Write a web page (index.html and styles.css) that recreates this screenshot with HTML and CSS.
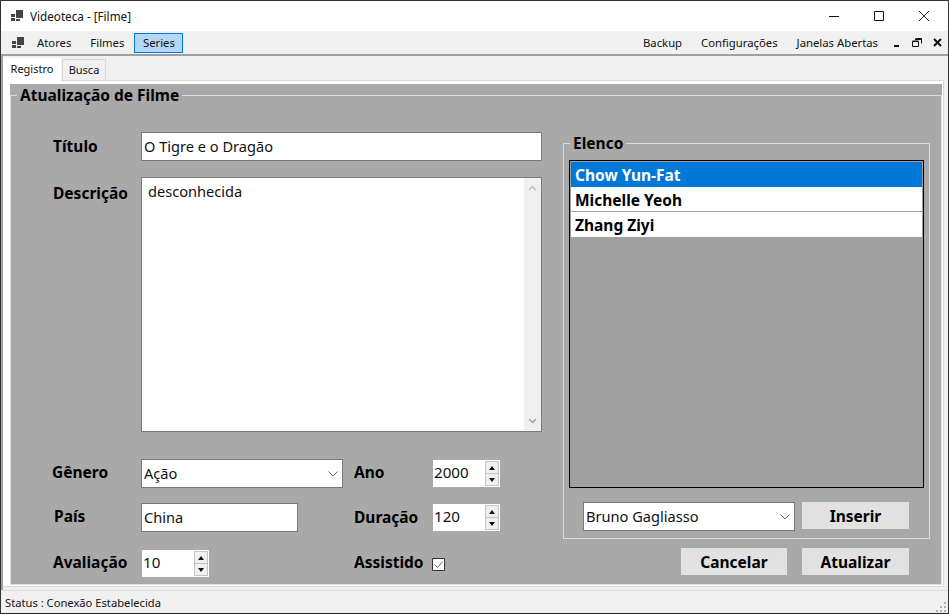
FILE: index.html
```html
<!DOCTYPE html>
<html lang="en">
<head>
	<meta charset="utf-8">
	<title>Videoteca - [Filme]</title>
	<link rel="stylesheet" href="styles.css">
</head>

<body>
	<div class="window">
		<div class="titlebar">
			<svg class="appicon" width="12" height="12" viewBox="0 0 12 12"><path d="M5 0h7v8H5zM0 4h4v3H0zM0 8h4v3H0zM5 9h4v2H5z" fill="#444"/></svg>
			<span class="titletext">Videoteca - [Filme]</span>
			<div class="wincontrols">
				<svg width="12" height="12" viewBox="0 0 12 12"><path d="M1 6.500h10" stroke="#111" fill="none"/></svg>
				<svg width="12" height="12" viewBox="0 0 12 12"><path d="M1.500 1.500h9v9h-9z" stroke="#111" fill="none"/></svg>
				<svg width="12" height="12" viewBox="0 0 12 12"><path d="M1 1l10 10M11 1L1 11" stroke="#222" fill="none"/></svg>
			</div>
		</div>

		<div class="menubar">
			<svg class="menuicon" width="12" height="12" viewBox="0 0 12 12"><path d="M5 0h7v8H5zM0 4h4v3H0zM0 8h4v3H0zM5 9h4v2H5z" fill="#444"/></svg>
			<span class="menuitem">Atores</span>
			<span class="menuitem">Filmes</span>
			<span class="menuitem active">Series</span>
			<span class="menuright">
				<span class="menuitem">Backup</span>
				<span class="menuitem">Configurações</span>
				<span class="menuitem">Janelas Abertas</span>
				<span class="mdicontrols">
					<svg width="8" height="9" viewBox="0 0 8 9"><path d="M1 7h5v2H1z" fill="#111"/></svg>
					<svg width="10" height="9" viewBox="0 0 10 9"><path d="M3.500.5h6v5M3 1.500h6M.5 3.500h6v5h-6zM.5 3h6" stroke="#111" fill="none"/></svg>
					<svg width="9" height="9" viewBox="0 0 9 9"><path d="M1 1l7 7M8 1L1 8" stroke="#111" stroke-width="2" fill="none"/></svg>
				</span>
			</span>
		</div>

		<div class="content">
			<div class="tabs">
				<span class="tab selected">Registro</span>
				<span class="tab">Busca</span>
			</div>
			<div class="tabpage">
				<div class="panel">
					<fieldset class="mainbox">
						<legend>Atualização de Filme</legend>
						<div class="leftcol">
							<div class="row row-titulo">
								<label>Título</label>
								<div class="field fill">O Tigre e o Dragão</div>
							</div>
							<div class="row row-desc">
								<label>Descrição</label>
								<div class="field memo">
									<span class="memotext">desconhecida</span>
									<div class="scrollbar">
										<svg width="9" height="6" viewBox="0 0 9 6"><path d="M1 5l3.500-3.500L8 5" stroke="#bdbdbd" stroke-width="1.500" fill="none"/></svg>
										<svg width="9" height="6" viewBox="0 0 9 6"><path d="M1 1l3.500 3.500L8 1" stroke="#a0a0a0" stroke-width="1.500" fill="none"/></svg>
									</div>
								</div>
							</div>
							<div class="lowergrid">
								<label>Gênero</label>
								<div class="field combo">Ação
									<svg width="10" height="6" viewBox="0 0 10 6"><path d="M.5.5L5 5 9.500.5" stroke="#666" fill="none"/></svg>
								</div>
								<label>Ano</label>
								<div class="spinner"><span>2000</span>
									<div class="spin"><i class="up"></i><i class="down"></i></div>
								</div>

								<label class="l-pais">País</label>
								<div class="field short">China</div>
								<label class="l-duracao">Duração</label>
								<div class="spinner"><span>120</span>
									<div class="spin"><i class="up"></i><i class="down"></i></div>
								</div>

								<label class="l-aval">Avaliação</label>
								<div class="spinner sp-aval"><span>10</span>
									<div class="spin"><i class="up"></i><i class="down"></i></div>
								</div>
								<label>Assistido</label>
								<div class="check">
									<svg width="13" height="13" viewBox="0 0 13 13"><path d="M.5.5h12v12H.5z" fill="#fff" stroke="#333"/><path d="M2.500 6.500l3 3 5-6" stroke="#666" fill="none"/></svg>
								</div>
							</div>
						</div>

						<div class="rightcol">
							<fieldset class="castbox">
								<legend>Elenco</legend>
								<ul class="castlist">
									<li class="current">Chow Yun-Fat</li>
									<li>Michelle Yeoh</li>
									<li>Zhang Ziyi</li>
								</ul>
								<div class="castadd">
									<div class="field combo castcombo">Bruno Gagliasso
										<svg width="10" height="6" viewBox="0 0 10 6"><path d="M.5.5L5 5 9.500.5" stroke="#666" fill="none"/></svg>
									</div>
									<button>Inserir</button>
								</div>
							</fieldset>
							<div class="actions">
								<button class="cancel">Cancelar</button>
								<button>Atualizar</button>
							</div>
						</div>
					</fieldset>
				</div>
			</div>
		</div>

		<div class="statusbar">
			<span>Status : Conexão Estabelecida</span>
			<svg width="11" height="11" viewBox="0 0 11 11"><path d="M8 0h2v2H8zM4 4h2v2H4zM8 4h2v2H8zM0 8h2v2H0zM4 8h2v2H4zM8 8h2v2H8z" fill="#b0b0b0"/></svg>
		</div>
	</div>
</body>

</html>
```

FILE: styles.css
```css
* {
	box-sizing: border-box;
}

body {
	margin: 0;
	font-family: "Noto Sans", Arial, sans-serif;
	font-size: 11.3px;
	color: #000;
	background: #fff;
}

.window {
	width: 949px;
	height: 614px;
	border: 1px solid #333;
	border-bottom-color: #222;
	display: flex;
	flex-direction: column;
	overflow: hidden;
}

/* title bar */
.titlebar {
	height: 30px;
	flex: none;
	display: flex;
	align-items: center;
	background: #fff;
}

.appicon {
	margin-left: 10px;
}

.titletext {
	margin-left: 7px;
	color: #111;
	font-size: 11.7px;
}

.wincontrols {
	margin-left: auto;
	display: flex;
	gap: 33px;
	margin-right: 18px;
}

/* menu */
.menubar {
	height: 25px;
	flex: none;
	display: flex;
	align-items: center;
	background: #f0f0f0;
	border-bottom: 2px solid #a0a0a0;
	padding-top: 1px;
}

.menuicon {
	margin-left: 11px;
	margin-right: 12px;
}

.menuitem {
	padding: 0 1px;
	margin-right: 17px;
	color: #111;
	line-height: 20px;
}

.menuitem.active {
	margin-right: 0;
	margin-left: -8px;
	width: 49px;
	height: 20px;
	line-height: 18px;
	text-align: center;
	background: #b5d7f3;
	border: 1px solid #0078d7;
}

.menuright {
	margin-left: auto;
	display: flex;
	align-items: center;
}

.menuright .menuitem {
	margin-right: 17px;
}

.menuright .menuitem:nth-child(3) {
	margin-right: 14px;
}

.mdicontrols {
	display: flex;
	align-items: center;
	gap: 11px;
	margin-right: 6px;
	margin-bottom: 2px;
}

/* tabs */
.content {
	flex: 1;
	min-height: 0;
	background: #f0f0f0;
	border-left: 2px solid #a0a0a0;
	padding: 1px 4px 3px 0;
	display: flex;
	flex-direction: column;
}

.tabs {
	height: 23px;
	flex: none;
	display: flex;
	align-items: flex-end;
	gap: 1px;
}

.tab {
	height: 21px;
	width: 44px;
	text-align: center;
	background: #f0f0f0;
	border: 1px solid #d9d9d9;
	border-bottom: none;
	color: #111;
	line-height: 20px;
	font-size: 11px;
}

.tab.selected {
	height: 23px;
	width: 58px;
	background: #fff;
	border-color: #fff;
	line-height: 19px;
	margin-bottom: -1px;
	position: relative;
}

.tabpage {
	flex: 1;
	min-height: 0;
	background: #fff;
	border: 1px solid #d9d9d9;
	border-left: none;
	padding: 3px 1px 1px 7px;
	display: flex;
}

.panel {
	flex: 1;
	display: flex;
	background: #a9a9a9;
}

/* main group */
fieldset {
	margin: 0;
	min-width: 0;
	border: 1px solid #dcdcdc;
}

legend {
	padding: 0 3px;
	font-weight: 700;
	font-size: 15.5px;
	line-height: 20px;
	color: #000;
}

.mainbox {
	flex: 1;
	padding: 0 11px 0 0;
	display: flex;
	gap: 21px;
	align-items: flex-start;
}

.mainbox > legend {
	margin-left: 6px;
	line-height: 22px;
}

.leftcol {
	width: 490px;
	margin-left: 41px;
	flex: none;
	padding-top: 25px;
}

.row {
	display: flex;
}

label {
	font-weight: 700;
	font-size: 15.5px;
	color: #000;
}

.row label {
	width: 89px;
	flex: none;
	padding-left: 1px;
}

.field {
	background: #fff;
	border: 1px solid #7a7a7a;
	font-size: 14.6px;
	line-height: 27px;
	padding-left: 2px;
	color: #111;
}

.row-titulo {
	height: 30px;
	align-items: center;
}

.row-titulo .fill {
	flex: 1;
	height: 29px;
}

.row-desc {
	margin-top: 16px;
	height: 255px;
}

.row-desc label {
	padding-top: 5px;
}

.memo {
	flex: 1;
	display: flex;
	justify-content: space-between;
	padding: 0 0 0 6px;
}

.memotext {
	line-height: 26px;
}

.scrollbar {
	width: 17px;
	background: #f0f0f0;
	display: flex;
	flex-direction: column;
	justify-content: space-between;
	align-items: center;
	padding: 7px 0;
}

/* lower controls */
.lowergrid {
	margin-top: 27px;
	display: grid;
	grid-template-columns: 89px 213px 79px 67px;
	grid-template-rows: 44px 46px 28px;
	align-items: start;
}

.lowergrid label {
	line-height: 26px;
}

.lowergrid .l-pais {
	padding-left: 2px;
}

.lowergrid .l-aval {
	padding-left: 1px;
}

.lowergrid .l-duracao {
	line-height: 28px;
}

.combo {
	width: 202px;
	height: 29px;
	display: flex;
	justify-content: space-between;
	align-items: center;
	padding-right: 4px;
}

.short {
	width: 157px;
	height: 29px;
}

.spinner {
	width: 67px;
	height: 27px;
	background: #fff;
	margin-top: 1px;
	display: flex;
	justify-content: space-between;
	font-size: 15.2px;
	line-height: 25px;
	padding: 0 0 0 1px;
	color: #111;
}

.sp-aval {
	margin-left: 1px;
}

.spin {
	width: 14px;
	margin: 1px 1px 1px 0;
	display: flex;
	flex-direction: column;
	border: 1px solid #c4c4c4;
	background: #c4c4c4;
	gap: 1px;
}

.spin i {
	flex: 1;
	background: #f0f0f0;
	display: flex;
	align-items: center;
	justify-content: center;
}

.spin i::before {
	content: "";
	border-left: 3px solid transparent;
	border-right: 3px solid transparent;
}

.spin .up::before {
	border-bottom: 4px solid #111;
}

.spin .down::before {
	border-top: 4px solid #111;
}

.check {
	height: 28px;
	display: flex;
	align-items: center;
	padding-top: 2px;
	margin-left: -1px;
}

/* cast group */
.rightcol {
	width: 367px;
	flex: none;
	padding-top: 27px;
}

.castbox {
	height: 406px;
	padding: 0 5px 0 5px;
	display: flex;
	flex-direction: column;
}

.castbox legend {
	margin-left: 1px;
	padding: 0 3px;
}

.castlist {
	list-style: none;
	margin: 7px 0 0;
	padding: 1px;
	height: 328px;
	background: #a0a0a0;
	border: 1px solid #000;
	font-weight: 700;
	font-size: 15.5px;
	flex: none;
}

.castlist li {
	height: 25px;
	line-height: 26px;
	padding-left: 4px;
	background: #fff;
	border-bottom: 1px solid #a0a0a0;
}

.castlist li:last-child {
	border-bottom: none;
}

.castlist .current {
	background: #0078d7;
	color: #fff;
	border-bottom: none;
}

.castadd {
	margin-top: 14px;
	margin-left: 14px;
	display: flex;
	gap: 7px;
	align-items: flex-start;
}

.castcombo {
	width: 212px;
}

button {
	width: 107px;
	height: 27px;
	background: #e1e1e1;
	border: none;
	font-family: inherit;
	font-weight: 700;
	font-size: 15.5px;
	color: #000;
	padding: 0;
}

.cancel {
	width: 106px;
}

.actions {
	margin-top: 9px;
	display: flex;
	justify-content: flex-end;
	gap: 15px;
	padding-right: 21px;
}

/* status */
.statusbar {
	height: 23px;
	flex: none;
	display: flex;
	align-items: center;
	justify-content: space-between;
	background: #f0f0f0;
	border-top: 1px solid #dcdcdc;
	padding: 0 1px 0 4px;
	color: #111;
	font-size: 11.2px;
}

.statusbar svg {
	align-self: flex-end;
}
```
